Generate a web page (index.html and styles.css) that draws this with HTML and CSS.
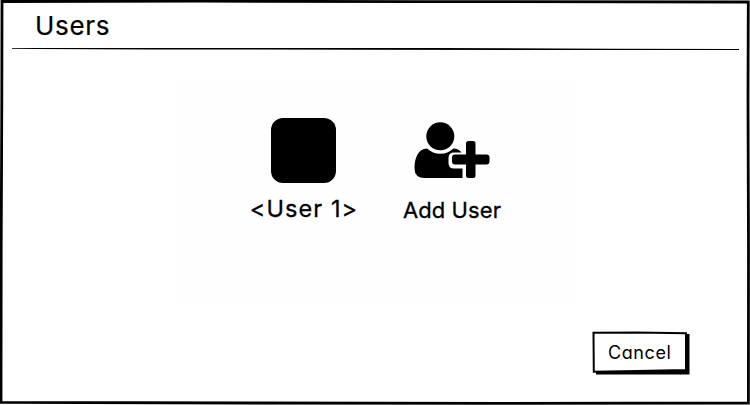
FILE: index.html
```
<!DOCTYPE html>
<html lang="en">
<head>
<meta charset="utf-8">
<title>Users</title>
<link rel="stylesheet" href="styles.css">
</head>
<body>
<main class="window">
  <svg class="frame" viewBox="0 0 750 405" aria-hidden="true">
    <path d="M2 1.5L200 1.2L420 1.6L748.3 2L748 100L748.5 250L748.4 403L500 403.3L250 403L1 402.3L1.2 250L1.8 100Z" fill="none" stroke="#000" stroke-width="2.8"/>
  </svg>
  <header class="header"><h1 class="title">Users</h1></header>
  <svg class="rule" viewBox="0 0 727 4" aria-hidden="true"><path d="M0 1L12 .9L250 1L430 1L600 1.8L727 2V3.1L560 3.1L350 2.7L140 2.5L24 2.1L0 1.8Z"/></svg>
  <section class="panel">
    <button class="user">
      <span class="avatar"></span>
      <span class="label label-user">&lt;User 1&gt;</span>
    </button>
    <button class="user add">
      <svg class="add-icon" viewBox="0 0 76 60" aria-hidden="true">
        <circle cx="26.3" cy="14.3" r="14"/>
        <path d="M13 26.5C17 30.2 21 31.7 26.3 31.7S35.5 30.2 39.5 26.5C43 26.5 45.5 27.7 47.5 30.5H40Q34.5 30.5 34.5 36V41Q34.5 46.5 40 46.5H48.5V56H11Q.5 56 .5 46.5C.5 36 4 27 13 26.5Z"/>
        <path d="M53.5 19H59Q61.5 19 61.5 21.5V32.5H72.5Q75.5 32.5 75.5 35V39.5Q75.5 42.5 72.5 42.5H61.5V53.5Q61.5 56 59 56H54.5Q52 56 52 53.5V42.5H41Q38 42.5 38 39.5V35.5Q38 32.5 41 32.5H52V21.5Q52 19 54.5 19Z"/>
      </svg>
      <span class="label label-add">Add User</span>
    </button>
  </section>
  <footer class="footer">
    <button class="cancel">
      <svg class="cancel-box" viewBox="0 0 98 44" aria-hidden="true">
        <path d="M4 3H97.5V43.5H4Z"/>
        <path d="M1.5 1.7L45 1.4L94 2.2L94 39L45 40L1.8 40.7Z" fill="#fff" stroke="#000" stroke-width="2"/>
      </svg>
      <span class="cancel-text">Cancel</span>
    </button>
  </footer>
</main>
</body>
</html>
```
FILE: styles.css
```
* { box-sizing: border-box; }
body { margin: 0; background: #fff; color: #000; font-family: Inter, "Liberation Sans", sans-serif; font-feature-settings: "cv11" 1; }
button { border: 0; padding: 0; background: none; color: inherit; font: inherit; font-feature-settings: inherit; }
.window { position: relative; width: 750px; height: 405px; overflow: hidden; display: flex; flex-direction: column; }
.frame { position: absolute; inset: 0; width: 750px; height: 405px; pointer-events: none; }
.header { height: 47px; padding: 10px 0 0 35px; flex: none; }
.title { margin: 0; font-size: 26px; line-height: 32px; font-weight: 400; letter-spacing: .7px; -webkit-text-stroke: .2px #000; }
.rule { display: block; width: 727px; height: 4px; margin-left: 12px; flex: none; }
.panel { width: 398px; height: 220px; margin: 32px 0 0 176px; padding: 35px 73px 0 74px; background: #fefefe; display: flex; justify-content: space-between; align-items: flex-start; flex: none; }
.user { display: flex; flex-direction: column; align-items: center; width: 107px; flex: none; }
.add { width: 98px; }
.avatar { width: 65px; height: 65px; border-radius: 12px; background: #000; }
.add-icon { width: 76px; height: 60px; margin: 4px 0 1px; }
.label { font-size: 22px; line-height: 26px; margin-top: 14px; white-space: nowrap; -webkit-text-stroke: .3px #000; }
.label-user { font-size: 23.5px; letter-spacing: 1.1px; margin-top: 13px; margin-right: -1px; }
.label-add { letter-spacing: .1px; }
.footer { display: flex; justify-content: flex-end; padding: 28px 60px 0 0; }
.cancel { position: relative; width: 98px; height: 44px; display: flex; align-items: center; }
.cancel-box { position: absolute; inset: 0; width: 98px; height: 44px; }
.cancel-text { position: relative; padding: 0 0 0 16px; font-size: 18px; line-height: 24px; letter-spacing: .6px; }
```
